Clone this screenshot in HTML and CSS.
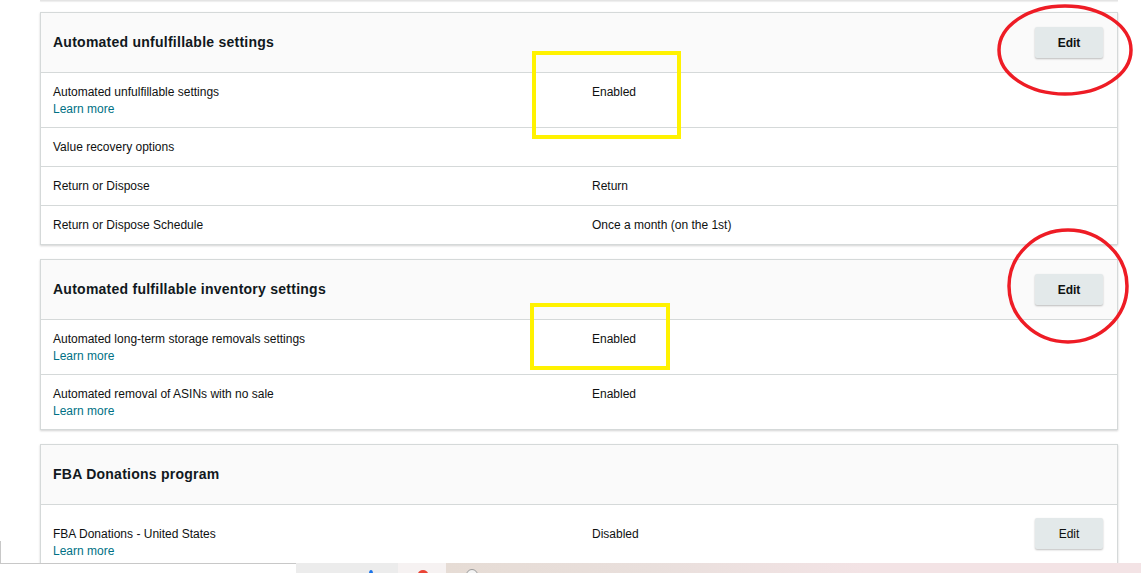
FILE: index.html
```html
<!DOCTYPE html>
<html lang="en">
<head>
  <meta charset="UTF-8">
  <title>Removal settings</title>
  <link rel="stylesheet" href="styles.css">
</head>
<body>

  <div class="page">
    <div class="card-tail"></div>

    <section class="card">
      <div class="card-header">
        <h2>Automated unfulfillable settings</h2>
        <button class="edit-button">Edit</button>
      </div>
      <div class="row">
        <div class="label">Automated unfulfillable settings<a href="#">Learn more</a></div>
        <div class="value">Enabled</div>
      </div>
      <div class="row">
        <div class="label">Value recovery options</div>
        <div class="value"></div>
      </div>
      <div class="row">
        <div class="label">Return or Dispose</div>
        <div class="value">Return</div>
      </div>
      <div class="row">
        <div class="label">Return or Dispose Schedule</div>
        <div class="value">Once a month (on the 1st)</div>
      </div>
    </section>

    <section class="card">
      <div class="card-header">
        <h2>Automated fulfillable inventory settings</h2>
        <button class="edit-button">Edit</button>
      </div>
      <div class="row">
        <div class="label">Automated long-term storage removals settings<a href="#">Learn more</a></div>
        <div class="value">Enabled</div>
      </div>
      <div class="row">
        <div class="label">Automated removal of ASINs with no sale<a href="#">Learn more</a></div>
        <div class="value">Enabled</div>
      </div>
    </section>

    <section class="card">
      <div class="card-header">
        <h2>FBA Donations program</h2>
      </div>
      <div class="row row-action">
        <div class="label">FBA Donations - United States<a href="#">Learn more</a></div>
        <div class="value">Disabled</div>
        <button class="edit-button plain">Edit</button>
      </div>
    </section>
  </div>

  <!-- markup drawn on the screenshot -->
  <div class="mark box" style="left:532px; top:51px; width:149px; height:88px;"></div>
  <div class="mark box" style="left:530px; top:303px; width:140px; height:67px;"></div>
  <svg class="mark ring" style="left:996px; top:2px;" width="140" height="96" viewBox="0 0 140 96">
    <ellipse cx="69" cy="48" rx="66" ry="44" fill="none" stroke="#ee1c25" stroke-width="3.5"/>
  </svg>
  <svg class="mark ring" style="left:1006px; top:227px;" width="126" height="120" viewBox="0 0 126 120">
    <ellipse cx="62" cy="59" rx="59" ry="56" fill="none" stroke="#ee1c25" stroke-width="3.5"/>
  </svg>

  <div class="peek"></div>
  <div class="taskbar">
    <div class="tb-white"></div>
    <div class="tb-grey"><span class="tb-dot blue"></span></div>
    <div class="tb-light"><span class="tb-dot red"></span></div>
    <div class="tb-pink"><span class="tb-dot ring-dot"></span></div>
  </div>

</body>
</html>
```

FILE: styles.css
```css
body {
  font-family: "Liberation Sans", Arial, sans-serif;
  font-size: 12px;
  line-height: 17px;
  color: #0f1111;
  background: white;
  margin: 0;
  padding: 0;
}

.page {
  width: 1078px;
  padding-left: 40px;
}

.card-tail {
  height: 1px;
  background: #e4e4e4;
  box-shadow: 0 1px 1px rgba(0, 0, 0, 0.08);
  margin-bottom: 11px;
}

.card {
  border: 1px solid #d5d9d9;
  box-shadow: 0 1px 2px rgba(0, 0, 0, 0.18);
  margin-bottom: 14px;
  background: white;
}

.card-header {
  display: flex;
  align-items: center;
  justify-content: space-between;
  height: 59px;
  padding: 0 14px 0 12px;
  background: #fafafa;
  border-bottom: 1px solid #d5d9d9;
}

.card-header h2 {
  margin: 0;
  font-size: 14px;
  font-weight: bold;
  letter-spacing: 0.25px;
  color: #111820;
}

.row {
  display: grid;
  grid-template-columns: 539px 1fr;
  padding: 11px 12px 10px;
  border-top: 1px solid #d5d9d9;
}

.card-header + .row {
  border-top: none;
}

.row a {
  display: block;
  line-height: 16px;
  color: #007185;
  text-decoration: none;
}

.row-action {
  grid-template-columns: 539px 1fr 68px;
  padding: 21px 14px 10px 12px;
}

.row-action .edit-button {
  margin-top: -8px;
}

.edit-button {
  width: 68px;
  height: 31px;
  border: none;
  border-radius: 2px;
  background: #e3e9ea;
  box-shadow: 0 1px 2px rgba(0, 0, 0, 0.25);
  font-family: inherit;
  font-size: 12px;
  font-weight: bold;
  color: #0f1111;
  cursor: pointer;
}

.edit-button.plain {
  font-weight: normal;
}

.mark {
  position: absolute;
  pointer-events: none;
}

.box {
  border: 4px solid #fff200;
  box-sizing: border-box;
}

.peek {
  position: fixed;
  left: 0;
  bottom: 10px;
  height: 22px;
  border-left: 1px solid #c8c8c8;
}

.taskbar {
  position: fixed;
  left: 0;
  right: 0;
  bottom: 0;
  height: 10px;
  display: flex;
}

.taskbar > div {
  position: relative;
  overflow: hidden;
}

.tb-white {
  width: 296px;
  background: white;
  border-top: 1px solid #c8c8c8;
}

.tb-grey {
  width: 102px;
  background: #ececec;
}

.tb-light {
  width: 48px;
  background: #f6f2f2;
}

.tb-pink {
  flex: 1;
  background: linear-gradient(to right, #e6dcd5, #e9dfdc 30%, #f3e3e5 60%, #f3e3e5);
}

.tb-dot {
  position: absolute;
  top: 7px;
  width: 8px;
  height: 8px;
  border-radius: 50%;
}

.tb-dot.blue {
  left: 73px;
  width: 4px;
  background: #1a73e8;
}

.tb-dot.red {
  left: 20px;
  width: 10px;
  background: #ea4335;
}

.tb-dot.ring-dot {
  left: 20px;
  width: 12px;
  height: 12px;
  top: 6px;
  border: 1px solid #9a9a9a;
  background: #f4f4f4;
  box-sizing: border-box;
}
```
